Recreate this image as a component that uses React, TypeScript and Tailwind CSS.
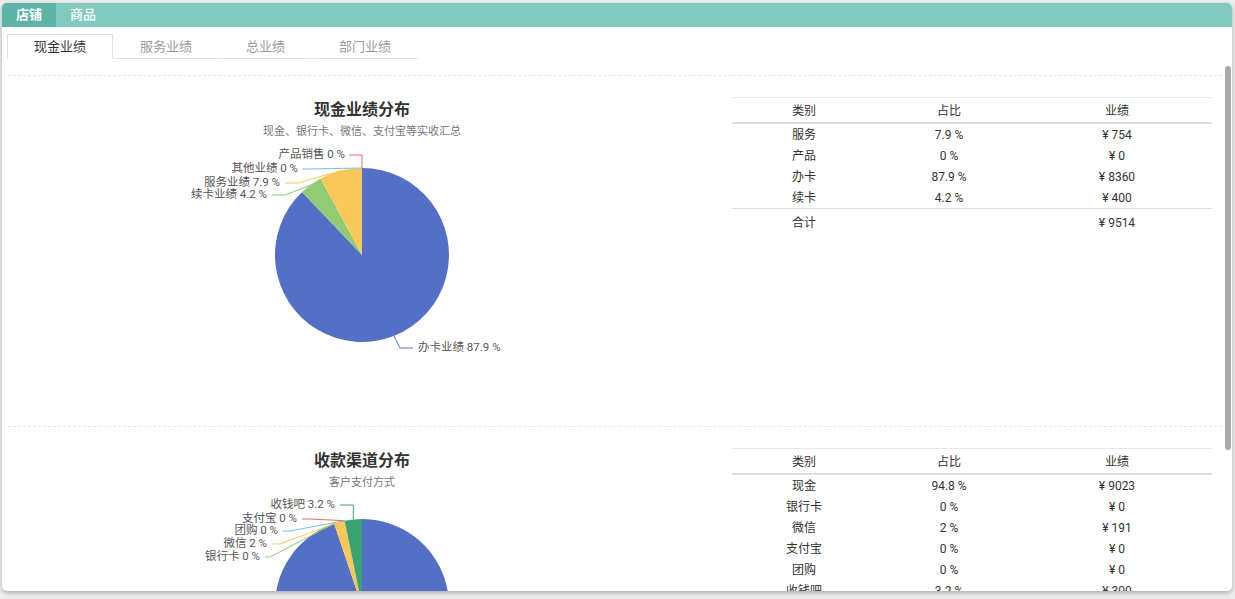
import React from "react";

type Slice = { value: number; color: string };
type Label = {
  text: string;
  color: string;
  points: [number, number][];
  tx: number;
  ty: number;
  anchor?: "start" | "end";
};
type Row = { name: string; pct: string; amount: string };

const CX = 354;
const CY = 115;
const R = 87;

const BLUE = "#5470c6";
const GREEN = "#91cc75";
const YELLOW = "#fac858";
const RED = "#ee6666";
const SKY = "#73c0de";
const DARKGREEN = "#3ba272";

function arcPath(start: number, end: number) {
  const a0 = start * 2 * Math.PI;
  const a1 = end * 2 * Math.PI;
  const x0 = CX + R * Math.sin(a0);
  const y0 = CY - R * Math.cos(a0);
  const x1 = CX + R * Math.sin(a1);
  const y1 = CY - R * Math.cos(a1);
  const large = end - start > 0.5 ? 1 : 0;
  return `M${CX} ${CY} L${x0} ${y0} A${R} ${R} 0 ${large} 1 ${x1} ${y1} Z`;
}

function Pie({ slices, labels }: { slices: Slice[]; labels: Label[] }) {
  const total = slices.reduce((s, x) => s + x.value, 0);
  let acc = 0;
  return (
    <svg width="708" height="220" viewBox="0 0 708 220" className="block shrink-0">
      {slices.map((s, i) => {
        const start = acc / total;
        acc += s.value;
        const end = acc / total;
        if (s.value <= 0) return null;
        return <path key={i} d={arcPath(start, end)} fill={s.color} />;
      })}
      {labels.map((l, i) => (
        <g key={i}>
          <polyline
            points={l.points.map((p) => p.join(",")).join(" ")}
            fill="none"
            stroke={l.color}
            strokeWidth="1"
          />
          <text
            x={l.tx}
            y={l.ty}
            textAnchor={l.anchor ?? "end"}
            dominantBaseline="middle"
            fontSize="11.5"
            fill="#555"
            fontFamily="Roboto, 'Noto Sans CJK SC', sans-serif"
          >
            {l.text}
          </text>
        </g>
      ))}
    </svg>
  );
}

function DataTable({ rows, total }: { rows: Row[]; total: string }) {
  return (
    <div className="mt-[21px] ml-[16px] w-[480px] self-start text-[12px] text-[#333]">
      <div className="grid h-[27px] grid-cols-[144px_146px_1fr] items-center border-t border-b-2 border-t-[#e8e8e8] border-b-[#dedede] pt-[2px] text-center">
        <span>类别</span>
        <span>占比</span>
        <span>业绩</span>
      </div>
      {rows.map((r) => (
        <div key={r.name} className="grid h-[21px] grid-cols-[144px_146px_1fr] items-center text-center">
          <span>{r.name}</span>
          <span>{r.pct}</span>
          <span>{r.amount}</span>
        </div>
      ))}
      <div className="grid h-[28px] grid-cols-[144px_146px_1fr] items-center border-t border-[#dedede] text-center">
        <span>合计</span>
        <span></span>
        <span>{total}</span>
      </div>
    </div>
  );
}

function Section({
  title,
  subtitle,
  slices,
  labels,
  rows,
  total,
}: {
  title: string;
  subtitle: string;
  slices: Slice[];
  labels: Label[];
  rows: Row[];
  total: string;
}) {
  return (
    <section className="flex h-[351px] border-t border-dashed border-[#e6e6e6]">
      <div className="flex w-[708px] shrink-0 flex-col items-center pt-[23px]">
        <h2 className="text-[16px] leading-[22px] font-semibold text-[#333]">{title}</h2>
        <p className="mt-[2px] text-[11px] leading-[17px] text-[#777]">{subtitle}</p>
        <Pie slices={slices} labels={labels} />
      </div>
      <DataTable rows={rows} total={total} />
    </section>
  );
}

const cashSlices: Slice[] = [
  { value: 87.9, color: BLUE },
  { value: 4.2, color: GREEN },
  { value: 7.9, color: YELLOW },
  { value: 0, color: RED },
  { value: 0, color: SKY },
];

const cashLabels: Label[] = [
  { text: "产品销售 0 %", color: RED, points: [[354, 28], [354, 15], [341, 15]], tx: 337, ty: 15 },
  { text: "其他业绩 0 %", color: SKY, points: [[354, 28], [300, 29], [294, 29]], tx: 290, ty: 29 },
  { text: "服务业绩 7.9 %", color: YELLOW, points: [[332.6, 30.7], [290, 43], [277, 43]], tx: 272, ty: 43 },
  { text: "续卡业绩 4.2 %", color: GREEN, points: [[303, 45], [277, 55], [264, 55]], tx: 259, ty: 55 },
  {
    text: "办卡业绩 87.9 %",
    color: BLUE,
    points: [[386, 196], [392, 208], [405, 208]],
    tx: 410,
    ty: 208,
    anchor: "start",
  },
];

const cashRows: Row[] = [
  { name: "服务", pct: "7.9 %", amount: "¥ 754" },
  { name: "产品", pct: "0 %", amount: "¥ 0" },
  { name: "办卡", pct: "87.9 %", amount: "¥ 8360" },
  { name: "续卡", pct: "4.2 %", amount: "¥ 400" },
];

const channelSlices: Slice[] = [
  { value: 94.8, color: BLUE },
  { value: 0, color: GREEN },
  { value: 2, color: YELLOW },
  { value: 0, color: RED },
  { value: 0, color: SKY },
  { value: 3.2, color: DARKGREEN },
];

const channelLabels: Label[] = [
  { text: "收钱吧 3.2 %", color: DARKGREEN, points: [[345.3, 28.4], [345.3, 14], [332, 14]], tx: 327, ty: 14 },
  { text: "支付宝 0 %", color: RED, points: [[336.6, 29.7], [302, 28], [294, 28]], tx: 289, ty: 28 },
  { text: "团购 0 %", color: SKY, points: [[336.6, 29.7], [282, 40], [275, 40]], tx: 270, ty: 40 },
  { text: "微信 2 %", color: YELLOW, points: [[331.3, 31], [272, 53], [264, 53]], tx: 259, ty: 53 },
  { text: "银行卡 0 %", color: GREEN, points: [[326, 32.6], [262, 66], [257, 66]], tx: 252, ty: 66 },
];

const channelRows: Row[] = [
  { name: "现金", pct: "94.8 %", amount: "¥ 9023" },
  { name: "银行卡", pct: "0 %", amount: "¥ 0" },
  { name: "微信", pct: "2 %", amount: "¥ 191" },
  { name: "支付宝", pct: "0 %", amount: "¥ 0" },
  { name: "团购", pct: "0 %", amount: "¥ 0" },
  { name: "收钱吧", pct: "3.2 %", amount: "¥ 300" },
];

const tabs = ["现金业绩", "服务业绩", "总业绩", "部门业绩"];

export default function App() {
  return (
    <div className="h-[599px] overflow-hidden bg-[#ededed] pt-[3px] pr-[3px] pl-[2px] font-['Roboto','Noto_Sans_CJK_SC',sans-serif]">
      <div className="relative flex h-[588px] flex-col overflow-hidden rounded-[5px] bg-white shadow-[0_2px_5px_rgba(0,0,0,0.28)]">
        {/* top bar */}
        <div className="flex h-[24px] shrink-0 items-stretch bg-[#80cac0] text-[13px] text-white">
          <div className="flex items-center bg-[#5db3a6] px-[14px] font-bold">店铺</div>
          <div className="flex items-center px-[14px] font-medium">商品</div>
        </div>

        {/* tabs */}
        <div className="flex shrink-0 pt-[7px] pl-[5px]">
          {tabs.map((t, i) => (
            <div
              key={t}
              className={
                i === 0
                  ? "flex h-[25px] items-center border border-[#e2e2e2] border-b-transparent bg-white px-[26px] text-[13px] text-[#333]"
                  : "flex h-[25px] items-center border border-transparent border-b-[#e2e2e2] px-[26px] text-[13px] text-[#9a9a9a]"
              }
            >
              {t}
            </div>
          ))}
        </div>

        {/* scrolling content */}
        <div className="min-h-0 flex-1 overflow-hidden pt-[16px] pr-[10px] pl-[6px]">
          <Section
            title="现金业绩分布"
            subtitle="现金、银行卡、微信、支付宝等实收汇总"
            slices={cashSlices}
            labels={cashLabels}
            rows={cashRows}
            total="¥ 9514"
          />
          <Section
            title="收款渠道分布"
            subtitle="客户支付方式"
            slices={channelSlices}
            labels={channelLabels}
            rows={channelRows}
            total="¥ 9514"
          />
        </div>

        {/* scrollbar thumb */}
        <div className="absolute top-[63px] right-[1px] h-[384px] w-[6px] rounded-full bg-[#a8a8a8]" />
      </div>
    </div>
  );
}
